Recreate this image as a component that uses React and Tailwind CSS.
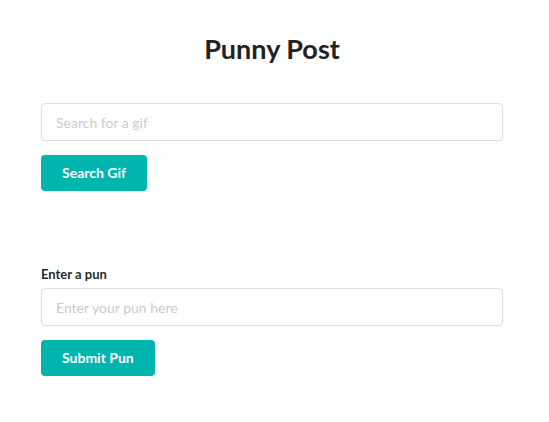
export default function App() {
  return (
    <div className="min-h-[422px] w-full bg-white font-['Lato','Liberation_Sans',sans-serif] text-[14px] text-[rgba(0,0,0,0.87)]">
      <div className="ml-[41px] w-[462px] pt-[33px]">
        <h1 className="text-center text-[27px] font-bold leading-[31px] text-[#222]">Punny Post</h1>
        <div className="mt-[39px] flex flex-col items-start">
          <input
            type="text"
            placeholder="Search for a gif"
            className="h-[38px] w-full rounded-[4px] border border-[rgba(34,36,38,0.15)] px-[14px] text-[14px] outline-none placeholder:text-[rgba(191,191,191,0.87)]"
          />
          <button className="mt-[14px] h-[36px] rounded-[4px] bg-[#00b5ad] px-[21px] text-[14px] font-bold leading-none text-white">
            Search Gif
          </button>
        </div>
        <div className="mt-[74px] flex flex-col items-start">
          <label className="mb-[4px] block text-[13px] font-bold leading-[19px]">Enter a pun</label>
          <input
            type="text"
            placeholder="Enter your pun here"
            className="h-[38px] w-full rounded-[4px] border border-[rgba(34,36,38,0.15)] px-[14px] text-[14px] outline-none placeholder:text-[rgba(191,191,191,0.87)]"
          />
          <button className="mt-[14px] h-[36px] rounded-[4px] bg-[#00b5ad] px-[21px] text-[14px] font-bold leading-none text-white">
            Submit Pun
          </button>
        </div>
      </div>
    </div>
  );
}
